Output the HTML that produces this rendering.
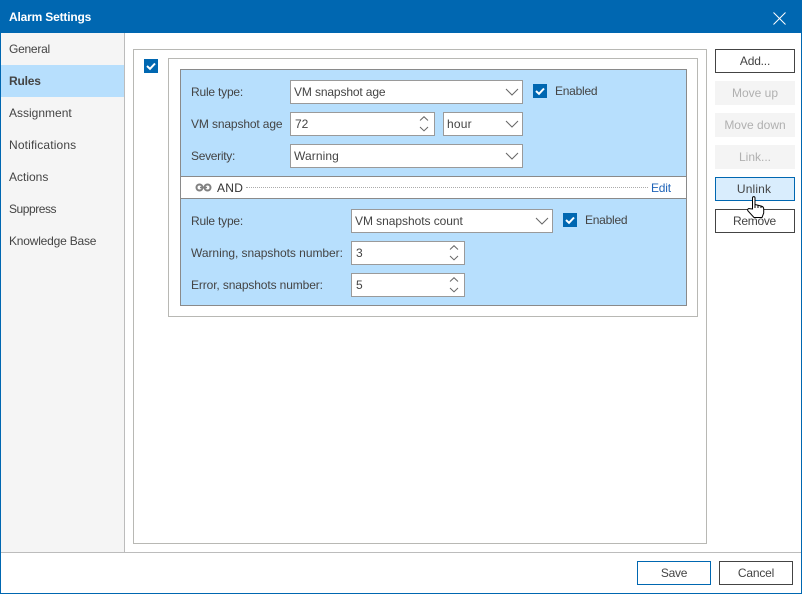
<!DOCTYPE html>
<html><head><meta charset="utf-8"><style>
html,body{margin:0;padding:0;background:#fff}
body{width:802px;height:594px;position:relative;overflow:hidden;font:12px "Liberation Sans",sans-serif;color:#444}
div,span,svg{position:absolute;box-sizing:border-box}
.t{white-space:nowrap;line-height:16px;height:16px}
.nav{left:9px;white-space:nowrap;line-height:16px}
.f{background:#fff;border:1px solid #9a9a9a;height:24px}
.b{left:715px;width:80px;height:24px;border:1px solid #444;background:#fff;text-align:center;line-height:22px;color:#444}
.d{border:0;background:#f4f4f4;color:#b0b0b0;line-height:24px}
.cb{width:14px;height:14px;background:#0067b1}
</style></head><body>
<div style="left:0;top:0;width:802px;height:594px;border:1px solid #0067b1;border-top:0"></div>
<div style="left:0;top:0;width:802px;height:33px;background:#0067b1"></div>
<div class="t" style="left:9px;top:9px;color:#fff;font-weight:bold;letter-spacing:-.18px">Alarm Settings</div>
<svg style="left:773px;top:12px" width="13" height="13" viewBox="0 0 13 13"><path d="M.5 .5L12.5 12.5M12.5 .5L.5 12.5" stroke="#fff" stroke-width="1" fill="none"/></svg>

<div style="left:1px;top:33px;width:123px;height:519px;background:#f5f5f5"></div>
<div style="left:124px;top:33px;width:1px;height:519px;background:#bcbcbc"></div>
<div style="left:1px;top:65px;width:123px;height:32px;background:#b7dffd"></div>
<div class="nav" style="top:41px;letter-spacing:-.25px">General</div>
<div class="nav" style="top:73px;font-weight:bold;letter-spacing:-.2px">Rules</div>
<div class="nav" style="top:105px">Assignment</div>
<div class="nav" style="top:137px;letter-spacing:.15px">Notifications</div>
<div class="nav" style="top:169px">Actions</div>
<div class="nav" style="top:201px;letter-spacing:-.45px">Suppress</div>
<div class="nav" style="top:233px;letter-spacing:-.2px">Knowledge Base</div>

<div style="left:1px;top:552px;width:800px;height:1px;background:#bcbcbc"></div>
<div style="left:133px;top:49px;width:574px;height:495px;border:1px solid #b8b8b4"></div>
<div style="left:168px;top:58px;width:530px;height:259px;border:1px solid #b8b8b4"></div>

<div class="cb" style="left:144px;top:59px"><svg style="left:0;top:0" width="14" height="14" viewBox="0 0 14 14"><path d="M3 7L6 9.8L11 4.5" stroke="#fff" stroke-width="2" fill="none"/></svg></div>

<div style="left:180px;top:69px;width:507px;height:237px;background:#b7dffd;border:1px solid #8a8a8a"></div>
<div style="left:181px;top:176px;width:505px;height:23px;background:#fff;border-top:1px solid #8a8a8a;border-bottom:1px solid #8a8a8a"></div>

<div class="t" style="left:191px;top:84px;letter-spacing:-.2px">Rule type:</div>
<div class="t" style="left:191px;top:116px;letter-spacing:-.13px">VM snapshot age</div>
<div class="t" style="left:191px;top:148px;letter-spacing:-.3px">Severity:</div>

<div class="f" style="left:290px;top:80px;width:233px"></div>
<div class="t" style="left:294px;top:84px;letter-spacing:-.13px">VM snapshot age</div>
<svg style="left:505px;top:88px" width="14" height="8"><path d="M1 1L7 7L13 1" stroke="#666" fill="none"/></svg>
<div class="cb" style="left:533px;top:84px"><svg style="left:0;top:0" width="14" height="14" viewBox="0 0 14 14"><path d="M3 7L6 9.8L11 4.5" stroke="#fff" stroke-width="2" fill="none"/></svg></div>
<div class="t" style="left:555px;top:83px;letter-spacing:-.25px">Enabled</div>

<div class="f" style="left:290px;top:112px;width:145px"></div>
<div class="t" style="left:295px;top:116px">72</div>
<svg style="left:419px;top:116px" width="10" height="16"><path d="M1 4.5L5 .7L9 4.5M1 11L5 14.8L9 11" stroke="#666" fill="none"/></svg>
<div class="f" style="left:443px;top:112px;width:80px"></div>
<div class="t" style="left:447px;top:116px;letter-spacing:.2px">hour</div>
<svg style="left:505px;top:120px" width="14" height="8"><path d="M1 1L7 7L13 1" stroke="#666" fill="none"/></svg>

<div class="f" style="left:290px;top:144px;width:233px"></div>
<div class="t" style="left:294px;top:148px;letter-spacing:.1px">Warning</div>
<svg style="left:505px;top:152px" width="14" height="8"><path d="M1 1L7 7L13 1" stroke="#666" fill="none"/></svg>

<svg style="left:195px;top:183px" width="17" height="9" viewBox="0 0 17 9"><circle cx="4.5" cy="4.5" r="3" fill="none" stroke="#808080" stroke-width="2"/><circle cx="12.5" cy="4.5" r="3" fill="none" stroke="#808080" stroke-width="2"/><path d="M5 4.5H12" stroke="#808080" stroke-width="1.5"/></svg>
<div class="t" style="left:217px;top:180px;color:#333;letter-spacing:.3px">AND</div>
<div style="left:246px;top:187px;width:402px;height:1px;border-top:1px dotted #aaa"></div>
<div class="t" style="left:651px;top:180px;color:#1f64b8;letter-spacing:-.2px">Edit</div>

<div class="t" style="left:191px;top:213px;letter-spacing:-.2px">Rule type:</div>
<div class="t" style="left:191px;top:245px;letter-spacing:-.04px">Warning, snapshots number:</div>
<div class="t" style="left:191px;top:277px;letter-spacing:-.12px">Error, snapshots number:</div>

<div class="f" style="left:351px;top:209px;width:202px"></div>
<div class="t" style="left:355px;top:213px;letter-spacing:-.05px">VM snapshots count</div>
<svg style="left:535px;top:217px" width="14" height="8"><path d="M1 1L7 7L13 1" stroke="#666" fill="none"/></svg>
<div class="cb" style="left:563px;top:213px"><svg style="left:0;top:0" width="14" height="14" viewBox="0 0 14 14"><path d="M3 7L6 9.8L11 4.5" stroke="#fff" stroke-width="2" fill="none"/></svg></div>
<div class="t" style="left:585px;top:212px;letter-spacing:-.25px">Enabled</div>

<div class="f" style="left:351px;top:241px;width:114px"></div>
<div class="t" style="left:356px;top:245px">3</div>
<svg style="left:449px;top:245px" width="10" height="16"><path d="M1 4.5L5 .7L9 4.5M1 11L5 14.8L9 11" stroke="#666" fill="none"/></svg>
<div class="f" style="left:351px;top:273px;width:114px"></div>
<div class="t" style="left:356px;top:277px">5</div>
<svg style="left:449px;top:277px" width="10" height="16"><path d="M1 4.5L5 .7L9 4.5M1 11L5 14.8L9 11" stroke="#666" fill="none"/></svg>

<div class="b" style="top:49px;letter-spacing:-.2px">Add...</div>
<div class="b d" style="top:81px">Move up</div>
<div class="b d" style="top:113px">Move down</div>
<div class="b d" style="top:145px">Link...</div>
<div class="b" style="top:177px;background:#d9edfd;border-color:#0067b1;padding-right:2px;letter-spacing:.15px">Unlink</div>
<div class="b" style="top:209px;letter-spacing:-.3px;padding-right:1px">Remove</div>
<svg style="left:747px;top:196px" width="18" height="23" viewBox="0 0 18 23"><path d="M5.5 13V2C5.5 .2 8 .2 8 2V8.5L14 10C16 10.5 16.7 11.5 16.7 13V17L15 21.5H7L1 15C0 13.5 1.5 11.8 3 12.8Z" fill="#fff" stroke="#000"/><path d="M8 8.5V12M11 9.5V12M14 10V12" stroke="#000" fill="none"/></svg>

<div class="b" style="left:637px;top:561px;width:74px;border-color:#0067b1;letter-spacing:-.25px">Save</div>
<div class="b" style="left:719px;top:561px;width:74px;letter-spacing:-.2px">Cancel</div>
</body></html>
